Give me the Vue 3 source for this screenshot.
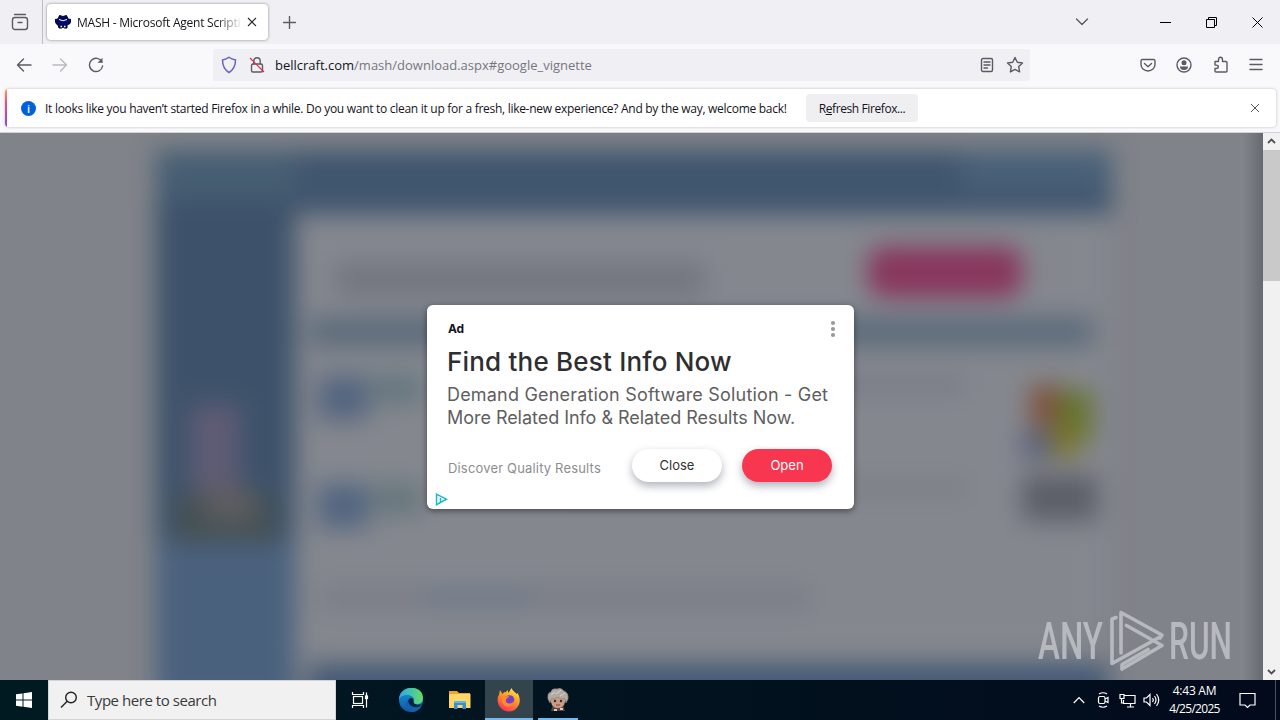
<template>
  <div class="desktop">
    <!-- Tab strip -->
    <header class="tab-strip">
      <div class="tab-view">
        <svg width="18" height="18" viewBox="0 0 18 18" class="line">
          <path d="M3.5 1.5h11" />
          <rect x="1.5" y="4.5" width="15" height="12" rx="2.5" />
          <path d="M7 9.5h4" />
        </svg>
      </div>
      <div class="tab">
        <svg width="16" height="16" viewBox="0 0 16 16">
          <path
            d="M4.500 1.500L8 2.500l3.500-1 1.500 3.500 3 .5-1 4-3 1.500v3h-3l-1-1.500-1 1.500H4l-1-3-2-1.500-1-4 3-.5z"
            fill="#000a6a"
            stroke="#00002e"
          />
          <path d="M4 5.500q4 2.500 8 0" stroke="#fff" fill="none" />
          <path d="M5.500 12.500h1.500M9 12.500h1.500" stroke="#fff" stroke-width="1.500" />
        </svg>
        <span class="tab-title">MASH - Microsoft Agent Scripti</span>
        <svg class="tab-close" width="10" height="10" viewBox="0 0 10 10">
          <path d="M1 1l8 8M9 1l-8 8" />
        </svg>
      </div>
      <svg class="new-tab line" width="13" height="13" viewBox="0 0 13 13">
        <path d="M6.500 0.500v12M0.500 6.500h12" />
      </svg>
      <div class="window-buttons">
        <svg class="line all-tabs" width="14" height="8" viewBox="0 0 14 8"><path d="M1.500 1l5.500 5.500L12.500 1" /></svg>
        <svg class="win" width="11" height="11" viewBox="0 0 11 11"><path d="M0 5.500h11" /></svg>
        <svg class="win" width="11" height="11" viewBox="0 0 11 11">
          <path d="M0.500 2.500h8v8h-8zM2.500 2.500v-2h8v8h-2" />
        </svg>
        <svg class="win" width="11" height="11" viewBox="0 0 11 11"><path d="M0.500 0.500l10 10M10.500 0.500l-10 10" /></svg>
      </div>
    </header>

    <!-- Navigation bar -->
    <nav class="nav-bar">
      <div class="nav-buttons">
        <svg class="line" width="16" height="16" viewBox="0 0 16 16"><path d="M15 8H2M7.500 2L1.500 8l6 6" /></svg>
        <svg class="line disabled" width="16" height="16" viewBox="0 0 16 16"><path d="M1 8h13M8.500 2l6 6-6 6" /></svg>
        <svg class="line" width="16" height="16" viewBox="0 0 16 16">
          <path d="M14 5A6.600 6.600 0 1 0 14.600 9" />
          <path d="M14.500 0.800v5h-5z" fill="#5b5b66" stroke="none" />
        </svg>
      </div>
      <div class="url-bar">
        <svg width="16" height="18" viewBox="0 0 16 18">
          <path
            d="M8 1.300Q10.500 3.400 14.500 4 14.500 12.500 8 16.500 1.500 12.500 1.500 4 5.500 3.400 8 1.300z"
            fill="none"
            stroke="#6a63bd"
            stroke-width="1.500"
          />
        </svg>
        <svg class="lock" width="16" height="18" viewBox="0 0 16 18">
          <g class="line">
            <rect x="2.500" y="8" width="11" height="8" rx="1.500" />
            <path d="M4.800 8V5a3.200 3.200 0 0 1 6.400 0v3" />
          </g>
          <path d="M1 2l14 14" stroke="#e22850" stroke-width="1.200" />
        </svg>
        <span class="url"><b>bellcraft.com</b>/mash/download.aspx#google_vignette</span>
        <svg class="line reader" width="14" height="16" viewBox="0 0 14 16">
          <rect x="1.500" y="1.500" width="11" height="13" rx="1.500" />
          <path d="M4 5h6M4 8h6M4 11h3.500" />
        </svg>
        <svg class="line" width="18" height="18" viewBox="0 0 18 18">
          <path d="M9 1.500l2.300 4.800 5.200.7-3.800 3.600.9 5.300L9 13.400l-4.600 2.500.9-5.300L1.500 7l5.200-.7z" />
        </svg>
      </div>
      <div class="tool-buttons">
        <svg class="line" width="16" height="16" viewBox="0 0 16 16">
          <path d="M2.500 2.500h11q1.500 0 1.500 1.500v3.500a7 6.500 0 0 1-14 0V4q0-1.500 1.500-1.500z" />
          <path d="M4.500 6.500L8 9.700l3.500-3.200" />
        </svg>
        <svg width="16" height="16" viewBox="0 0 16 16">
          <circle cx="8" cy="8" r="7" fill="none" stroke="#5b5b66" stroke-width="1.400" />
          <circle cx="8" cy="5.700" r="2.500" fill="#5b5b66" />
          <path d="M4 9.500h8q0 3.500-4 3.500t-4-3.500z" fill="#5b5b66" />
        </svg>
        <svg class="line" width="16" height="17" viewBox="0 0 16 17">
          <path
            d="M2 5.500h3.500V4q0-2.700 2-2.700T9.500 4v1.500h3.500q1 0 1 1V15q0 1-1 1H3q-1 0-1-1v-2.500h1.300q2 0 2-1.700t-2-1.700H2z"
          />
        </svg>
        <svg class="line" width="14" height="13" viewBox="0 0 14 13"><path d="M1 1.500h12M1 6.500h12M1 11.500h12" /></svg>
      </div>
    </nav>

    <!-- Notification -->
    <div class="notice-area">
      <div class="notice">
        <span class="info">i</span>
        <span class="notice-text"
          >It looks like you haven’t started Firefox in a while. Do you want to clean it up for a fresh, like-new
          experience? And by the way, welcome back!</span
        >
        <button class="refresh">R<u>e</u>fresh Firefox...</button>
        <svg class="notice-close" width="10" height="10" viewBox="0 0 10 10"><path d="M1 1l8 8M9 1l-8 8" /></svg>
      </div>
    </div>

    <!-- Web page -->
    <main class="page">
      <div class="viewport">
        <svg class="backdrop" width="1263" height="547" viewBox="0 133 1263 547">
          <defs>
            <filter
              id="soft"
              filterUnits="userSpaceOnUse"
              x="80"
              y="60"
              width="1120"
              height="740"
              color-interpolation-filters="sRGB"
            >
              <feGaussianBlur stdDeviation="12" />
            </filter>
            <linearGradient id="edge">
              <stop offset="0" stop-color="#6a6d74" stop-opacity="0" />
              <stop offset="1" stop-color="#666970" />
            </linearGradient>
          </defs>
          <rect y="133" width="1263" height="547" fill="#808389" />
          <g filter="url(#soft)">
            <rect x="290" y="210" width="818" height="450" fill="#84878e" />
            <rect
              v-for="(b, i) in blocks"
              :key="i"
              :x="b[0]"
              :y="b[1]"
              :width="b[2]"
              :height="b[3]"
              :fill="b[4]"
            />
            <rect x="868" y="247" width="154" height="50" rx="16" fill="#88365d" />
          </g>
          <rect x="1243" y="133" width="20" height="547" fill="url(#edge)" />
        </svg>

        <section class="ad">
          <div class="ad-head">
            <span>Ad</span>
            <svg width="6" height="18" viewBox="0 0 6 18" fill="#9a9a9a">
              <circle cx="3" cy="3" r="2.100" />
              <circle cx="3" cy="9" r="2.100" />
              <circle cx="3" cy="15" r="2.100" />
            </svg>
          </div>
          <h1>Find the Best Info Now</h1>
          <p class="ad-text">
            <span class="first">Demand Generation Software Solution - Get</span><br />
            <span>More Related Info &amp; Related Results Now.</span>
          </p>
          <div class="ad-foot">
            <span class="ad-source">Discover Quality Results</span>
            <button class="pill">Close</button>
            <button class="pill open">Open</button>
          </div>
          <svg class="ad-choices" width="13" height="13" viewBox="0 0 13 13">
            <path d="M1.500 1.200l10 5-10 5.500z" fill="#d8f8fb" stroke="#22b4c8" stroke-width="1.400" />
            <path d="M5.500 5v4" stroke="#22b4c8" stroke-width="1.300" />
          </svg>
        </section>

        <svg class="watermark" width="227" height="74" viewBox="1036 604 227 74">
          <text x="1038" y="659" textLength="65" lengthAdjust="spacingAndGlyphs">ANY</text>
          <g fill="none" stroke="#c0c3c7" stroke-width="3.600" stroke-linejoin="round" stroke-linecap="round">
            <path d="M1116 617.500l-4 1.500v44.500l47-26" />
            <path d="M1121 653v-40.500l41 22.500-2 3" />
            <path d="M1126.500 625.500l35.500 20-40 23.500v-4.500l26-15" />
          </g>
          <text x="1169" y="659" textLength="63" lengthAdjust="spacingAndGlyphs">RUN</text>
        </svg>
      </div>
      <div class="scrollbar">
        <svg width="9" height="6" viewBox="0 0 9 6"><path d="M1 5l3.500-3.500L8 5" /></svg>
        <div class="thumb"></div>
        <svg width="9" height="6" viewBox="0 0 9 6"><path d="M1 1l3.500 3.500L8 1" /></svg>
      </div>
    </main>

    <!-- Taskbar -->
    <footer class="taskbar">
      <div class="start">
        <svg width="16" height="16" viewBox="0 0 16 16" fill="#fff">
          <path d="M0 2.300L6.500 1.400v6.200H0zM7.500 1.200L16 0v7.600H7.500zM0 8.500h6.500v6.200L0 13.800zM7.500 8.500H16V16l-8.500-1.200z" />
        </svg>
      </div>
      <div class="search">
        <svg width="18" height="18" viewBox="0 0 18 18" fill="none" stroke="#222" stroke-width="1.400">
          <circle cx="11" cy="6.500" r="5.300" />
          <path d="M7.200 10.300L1 16.500" />
        </svg>
        <span>Type here to search</span>
      </div>
      <div class="apps">
        <div class="app">
          <svg width="18" height="18" viewBox="0 0 18 18" fill="none" stroke="#fff" stroke-width="1.200">
            <rect x="2.500" y="5.500" width="9" height="7" />
            <path d="M1.500 1v2.500h11V1M1.500 17v-2.500h11V17M15.500 1.500v15" />
            <rect x="14.500" y="5" width="2" height="2.500" fill="#fff" />
          </svg>
        </div>
        <div class="app edge">
          <svg width="24" height="24" viewBox="0 0 24 24">
            <defs>
              <linearGradient id="edgeTop">
                <stop offset="0" stop-color="#2aa9e8" />
                <stop offset="1" stop-color="#64dd67" />
              </linearGradient>
              <linearGradient id="edgeLow" x2="0" y2="1">
                <stop offset="0" stop-color="#1b93df" />
                <stop offset="1" stop-color="#0c59a4" />
              </linearGradient>
            </defs>
            <circle cx="12" cy="12" r="12" fill="url(#edgeLow)" />
            <path d="M0 12C0-4 24-4 24 10c0 5-4 7-8 6-3-1-1-2-1-4 0-6-13-7-15 0z" fill="url(#edgeTop)" />
            <path d="M9 13c1-4 6-4 5.500 0-.5 3 4 5 8.500 3-2 2.500-4 3.500-7 3.500-4 0-7-3-7-6.500z" fill="#04243c" />
            <path d="M9 12c-5 4-1 11 5 12 4-.5 7-3 8.500-5.500C16 21 9 18 9 12z" fill="#1460ae" />
          </svg>
        </div>
        <div class="app">
          <svg width="22" height="20" viewBox="0 0 22 20">
            <path d="M0 1h8l2 2h11v15H0z" fill="#e8a72e" />
            <path d="M1 4h20.500v14H0V5z" fill="#ffd766" />
            <path d="M5 11h12v8h-3.500v-4h-5v4H5z" fill="#368fd0" />
            <path d="M5 11h12v2H5z" fill="#60b8ea" />
          </svg>
        </div>
        <div class="app active">
          <svg width="24" height="24" viewBox="0 0 24 24">
            <defs>
              <linearGradient id="fox" x1=".8" x2=".3" y2="1">
                <stop offset="0" stop-color="#fff04a" />
                <stop offset=".45" stop-color="#ff9a22" />
                <stop offset="1" stop-color="#f4315c" />
              </linearGradient>
            </defs>
            <path
              d="M3 2l2.500 4C7 4 8 4 9 4l1.500-2 1 3 3-5c1 3 4 4 5 6l1-1c3 5 3 10 0 14-4 6-13 6-17.500 0C0 15 0 9 2 7z"
              fill="url(#fox)"
            />
            <circle cx="12.500" cy="12" r="4.800" fill="#7540c8" />
            <path d="M5 8c3-1 4 1 7 0 0 2-3 2-3 4-1 4 5 5 8 1-1 6-9 8-12 1z" fill="#ff8a2c" />
          </svg>
        </div>
        <div class="app running">
          <svg width="22" height="24" viewBox="0 0 22 24">
            <path d="M6 17l-2 6h14l-2-6z" fill="#5b4340" />
            <path d="M4 8h14v6q-1 6-7 6t-7-6z" fill="#c99c86" />
            <path
              d="M1 11Q0 5 4 4q1-4 6-3 4-2 7 2 5 2 4 8l-2 4-1.500-4.500-3.500.5-3-2-4 2-2.500-.5L3 15z"
              fill="#b3aba2"
              stroke="#857d78"
              stroke-width=".6"
            />
            <path d="M4 7l4-3M9 6l5-4M13 8l5-3" stroke="#dcd5cb" />
            <circle cx="8" cy="13" r="1.200" fill="#332a2c" />
            <circle cx="14" cy="13" r="1.200" fill="#332a2c" />
            <path d="M9 17h4" stroke="#8c3f38" />
            <path d="M7 22h3M13 21h3" stroke="#d9cabe" stroke-width="2" />
          </svg>
        </div>
      </div>
      <div class="tray">
        <svg width="12" height="8" viewBox="0 0 12 8"><path d="M0.800 7L6 1.500 11.200 7" /></svg>
        <svg width="13" height="16" viewBox="0 0 13 16">
          <rect x="1.500" y="4.500" width="6.500" height="7" rx="1.500" />
          <path d="M8 7l3-1.500v5L8 9M2 2q4-2.500 8 0M2 14q4 2.500 8 0" />
        </svg>
        <svg width="17" height="15" viewBox="0 0 17 15">
          <path d="M5 2.500h11v8H4.500V7M8 14h7M11.500 10.500V14M1 1.500h4v4H1zM2.500 5.500V10H5" />
        </svg>
        <svg width="17" height="14" viewBox="0 0 17 14">
          <path d="M1 5h2.500L7 1.500v11L3.500 9H1zM9.500 5q1.500 2 0 4M11.500 3q3 4 0 8M13.500 1q4.500 6 0 12" />
        </svg>
        <div class="clock">
          <span class="time">4:43 AM</span>
          <span class="date">4/25/2025</span>
        </div>
        <svg width="17" height="17" viewBox="0 0 17 17">
          <path d="M1 1.500h15v11.500h-5l-2.500 2.500L6 13H1z" />
        </svg>
      </div>
      <div class="show-desktop"></div>
    </footer>
  </div>
</template>

<script setup>
// soft page shapes behind the ad: x, y, width, height, fill
const blocks = [
  [156, 150, 956, 64, '#40556e'],
  [156, 150, 140, 46, '#465e72'],
  [960, 150, 152, 40, '#486077'],
  [156, 205, 139, 500, '#3d526a'],
  [156, 540, 139, 165, '#4a617e'],
  [190, 405, 50, 95, '#5f5c74'],
  [175, 495, 100, 48, '#455153'],
  [205, 488, 50, 34, '#5e5d60'],
  [335, 263, 370, 33, '#737680'],
  [310, 317, 783, 30, '#5d6b7b'],
  [318, 376, 50, 44, '#546580'],
  [372, 374, 50, 30, '#65767f'],
  [318, 484, 50, 44, '#526580'],
  [372, 484, 50, 30, '#65767c'],
  [560, 375, 405, 20, '#7a7d86'],
  [560, 480, 410, 16, '#7c7f86'],
  [320, 585, 490, 25, '#7b7e86'],
  [425, 588, 105, 20, '#727c8b'],
  [1030, 385, 32, 42, '#80533f'],
  [1058, 390, 34, 50, '#65742f'],
  [1022, 430, 35, 28, '#5c617a'],
  [1052, 428, 28, 28, '#7d7628'],
  [1022, 475, 75, 46, '#5c5f67'],
  [310, 664, 798, 60, '#435974'],
]
</script>

<style>
body {
  margin: 0;
  overflow: hidden;
}
</style>

<style scoped>
.desktop {
  width: 1280px;
  height: 720px;
  display: flex;
  flex-direction: column;
  overflow: hidden;
  background: #f9f9fb;
  font-family: 'Open Sans', 'Noto Sans', sans-serif;
  font-size: 12px;
  color: #15141a;
}
svg {
  display: block;
  flex: none;
}
button {
  border: none;
  padding: 0;
  font-family: inherit;
}
.line {
  fill: none;
  stroke: #5b5b66;
  stroke-width: 1.4;
  stroke-linejoin: round;
  stroke-linecap: round;
}

/* Tab strip */
.tab-strip {
  height: 44px;
  flex: none;
  display: flex;
  align-items: center;
  background: #f0f0f4;
}
.tab-view {
  width: 43px;
  height: 44px;
  box-sizing: border-box;
  padding-left: 11px;
  display: flex;
  align-items: center;
  border-right: 1px solid #bdbdc6;
}
.tab {
  width: 221px;
  height: 36px;
  margin: 0 0 1px 4px;
  box-sizing: border-box;
  padding: 0 11px 0 8px;
  display: flex;
  align-items: center;
  background: #fff;
  border-radius: 4px;
  box-shadow: 0 0 3px rgba(0, 0, 0, 0.45);
}
.tab-title {
  width: 167px;
  margin: 1px 4px 0 6px;
  white-space: nowrap;
  letter-spacing: -0.24px;
  -webkit-mask-image: linear-gradient(90deg, #000 84%, transparent);
  mask-image: linear-gradient(90deg, #000 84%, transparent);
}
.tab-close,
.notice-close {
  stroke: #2b2a33;
  stroke-width: 1.1;
}
.new-tab {
  margin-left: 15px;
}
.window-buttons {
  margin-left: auto;
  padding-right: 17px;
  display: flex;
  align-items: center;
  gap: 35px;
}
.all-tabs {
  margin-right: 36px;
}
.win {
  fill: none;
  stroke: #000;
  stroke-width: 1;
}

/* Navigation bar */
.nav-bar {
  height: 41px;
  flex: none;
  display: flex;
  align-items: center;
}
.nav-buttons {
  width: 213px;
  box-sizing: border-box;
  padding-left: 16px;
  display: flex;
  gap: 20px;
}
.disabled {
  opacity: 0.4;
}
.url-bar {
  width: 817px;
  height: 32px;
  box-sizing: border-box;
  padding: 0 6px 0 8px;
  display: flex;
  align-items: center;
  background: #f0f0f4;
  border-radius: 2px;
}
.lock {
  margin: 0 10px 0 12px;
}
.url {
  flex: 1;
  font-size: 13px;
  color: #77767e;
}
.url b {
  font-weight: 400;
  color: #15141a;
}
.reader {
  margin-right: 12px;
}
.tool-buttons {
  margin-left: auto;
  padding-right: 17px;
  display: flex;
  align-items: center;
  gap: 20.5px;
}

/* Notification */
.notice-area {
  height: 48px;
  flex: none;
  box-sizing: border-box;
  padding: 4px 4px 6px 5px;
  border-bottom: 1px solid #d2d2d6;
}
.notice {
  height: 38px;
  box-sizing: border-box;
  padding: 0 16px 0 14px;
  display: flex;
  align-items: center;
  background: linear-gradient(#ff9a55, #e64c8c 35%, #8a4cc8) left / 2px 100% no-repeat #fff;
  border-radius: 4px;
  box-shadow: 0 0 3px rgba(0, 0, 0, 0.25);
}
.info {
  width: 15px;
  height: 15px;
  margin: 0 9px 0 2px;
  border-radius: 50%;
  background: #0060df;
  color: #fff;
  font-size: 11px;
  font-weight: 600;
  line-height: 15px;
  text-align: center;
}
.notice-text {
  width: 742px;
  white-space: nowrap;
  letter-spacing: -0.285px;
}
.refresh {
  width: 112px;
  height: 28px;
  margin-left: 19px;
  border-radius: 4px;
  background: #efeff2;
  color: #15141a;
  font-size: 12px;
  letter-spacing: -0.4px;
}
.notice-close {
  margin-left: auto;
  stroke: #55545c;
  stroke-width: 1;
}

/* Web page */
.page {
  height: 547px;
  flex: none;
  display: flex;
}
.viewport {
  width: 1263px;
  position: relative;
  overflow: hidden;
}
.ad {
  position: absolute;
  left: 427px;
  top: 172px;
  width: 427px;
  height: 204px;
  box-sizing: border-box;
  padding: 14px 22px 0 20px;
  background: #fff;
  border-radius: 6px;
  box-shadow: 0 2px 6px rgba(0, 0, 0, 0.45);
  font-family: Inter, sans-serif;
}
.ad-head {
  height: 20px;
  margin-right: -4px;
  padding-left: 1px;
  display: flex;
  align-items: center;
  justify-content: space-between;
  font-weight: 700;
  letter-spacing: -0.3px;
  line-height: 20px;
}
.ad h1 {
  margin: 5px 0 0;
  font-size: 26px;
  line-height: 36px;
  font-weight: 500;
  letter-spacing: 0.2px;
  color: #2e2e30;
  white-space: nowrap;
}
.ad-text {
  margin: 3px 0 0;
  font-size: 18px;
  line-height: 23px;
  letter-spacing: -0.04px;
  color: #5e5e60;
  white-space: nowrap;
}
.first {
  letter-spacing: 0.19px;
}
.ad-foot {
  margin-top: 20px;
  display: flex;
  align-items: center;
}
.ad-source {
  width: 185px;
  padding-top: 5px;
  padding-left: 1px;
  box-sizing: border-box;
  font-size: 13px;
  letter-spacing: 0.17px;
  color: #8d8d90;
  white-space: nowrap;
}
.pill {
  width: 90px;
  height: 33px;
  margin-right: 20px;
  padding-bottom: 2px;
  border-radius: 17px;
  background: #fff;
  box-shadow: 0 4px 8px rgba(60, 64, 90, 0.4);
  font-size: 13px;
  color: #333;
}
.open {
  flex: none;
  margin: 0;
  background: #f8364f;
  color: #fff;
}
.ad-choices {
  position: absolute;
  left: 8px;
  bottom: 3px;
}
.watermark {
  position: absolute;
  left: 1036px;
  top: 471px;
  overflow: visible;
  opacity: 0.85;
}
.watermark text {
  font-family: Roboto, sans-serif;
  font-size: 51px;
  font-weight: 500;
  fill: #c0c3c7;
}
.scrollbar {
  width: 17px;
  box-sizing: border-box;
  padding: 5px 0;
  display: flex;
  flex-direction: column;
  align-items: center;
  background: #f1f1f1;
  fill: none;
  stroke: #505050;
  stroke-width: 1.8;
}
.thumb {
  width: 17px;
  height: 131px;
  margin: 6px 0 auto;
  background: #c9c9c9;
}

/* Taskbar */
.taskbar {
  height: 40px;
  flex: none;
  display: flex;
  align-items: stretch;
  background: linear-gradient(90deg, #001a22, #02131f 50%, #020a1c);
  color: #fff;
}
.start {
  width: 48px;
  display: flex;
  align-items: center;
  justify-content: center;
}
.search {
  width: 288px;
  box-sizing: border-box;
  padding-left: 11px;
  display: flex;
  align-items: center;
  gap: 9px;
  background: #f1f1f1;
  border: 1px solid #d5d5d5;
  color: #3a3a3a;
  font-size: 15px;
  letter-spacing: -0.45px;
}
.apps {
  display: flex;
  gap: 1px;
}
.app {
  width: 48px;
  display: flex;
  align-items: center;
  justify-content: center;
}
.edge {
  margin-left: 2px;
}
.active {
  background: #34444d;
  box-shadow: inset 0 -2px #76b9ed;
}
.running {
  background: linear-gradient(#76b9ed, #76b9ed) center bottom / 40px 2px no-repeat;
}
.tray {
  margin-left: auto;
  padding-right: 19px;
  display: flex;
  align-items: center;
  fill: none;
  stroke: #fff;
  stroke-width: 1.2;
}
.tray svg {
  margin-right: 12px;
}
.tray svg:nth-child(2) {
  margin-right: 9px;
}
.tray svg:nth-child(3) {
  margin-right: 7px;
}
.tray svg:nth-child(4) {
  margin-right: 8px;
}
.tray svg:last-child {
  margin: 0 0 0 18px;
}
.clock {
  width: 53px;
  display: flex;
  flex-direction: column;
  align-items: center;
  line-height: 18px;
  white-space: nowrap;
}
.time {
  letter-spacing: -0.25px;
}
.date {
  letter-spacing: -0.7px;
}
.show-desktop {
  width: 5px;
  box-sizing: border-box;
  border-left: 1px solid #4a505c;
}
</style>
